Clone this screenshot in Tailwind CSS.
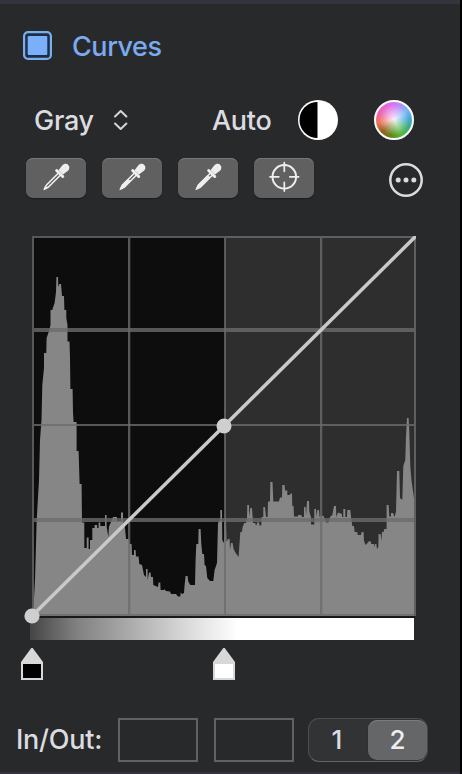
<!DOCTYPE html>
<html lang="en">
<head>
<meta charset="utf-8">
<title>Curves</title>
<script src="https://cdn.jsdelivr.net/npm/@tailwindcss/browser@4"></script>
</head>
<body class="w-[462px] h-[774px] overflow-hidden bg-black font-['Inter','Liberation_Sans',sans-serif] text-[#dcdce0]">
<main class="flex h-[774px] w-[460px] flex-col bg-[#28292b] border-t-4 border-b-2 border-t-[#34343d] border-b-[#35323e]">
  <header class="flex h-[84px] items-center pl-[23px]">
    <svg class="-mt-0.5 size-[29px] shrink-0" viewBox="0 0 29 29"><rect x="1.1" y="1.1" width="26.8" height="26.8" rx="4" fill="#1d2d42" stroke="#79aef3" stroke-width="2.2"/><rect x="4.7" y="5" width="19.6" height="19" rx="1" fill="#7ab0fa"/></svg>
    <h1 class="ml-5 mt-0.5 text-[27px] leading-8 font-medium tracking-[-0.45px] text-[#7aaaf0]">Curves</h1>
  </header>

  <section class="flex h-16 items-center pl-[34px]">
    <span class="mt-0.5 w-[78px] text-[27px] leading-8 font-medium tracking-[-0.3px]">Gray</span>
    <svg class="h-6 w-[18px] shrink-0" viewBox="0 0 18 24" fill="none" stroke="#d6d6da" stroke-width="2" stroke-linecap="round" stroke-linejoin="round"><path d="M3 8.5 8.7 3l5.700 5.500M3 15.500l5.700 5.500 5.700-5.500"/></svg>
    <span class="ml-[82px] mt-0.5 w-[86px] text-[27px] leading-8 font-medium tracking-[-0.3px]">Auto</span>
    <svg class="size-10 shrink-0" viewBox="0 0 40 40"><circle cx="20" cy="20" r="20" fill="#fff"/><path d="M19.500 2a18 18 0 0 0 0 36z" fill="#000"/></svg>
    <div class="ml-9 size-10 shrink-0 rounded-full border-2 border-white bg-[radial-gradient(circle,#ffffffe0_0%,#ffffff70_30%,#ffffff00_60%),conic-gradient(#d875f3,#78b7f5_55deg,#43a8d8_85deg,#3cae83_115deg,#58b83d_155deg,#5c8718_190deg,#96611e_225deg,#ef7454_260deg,#ee62b8_300deg,#d875f3)]"></div>
  </section>

  <section class="flex h-[52px] items-start gap-4 pl-[26px] pt-1.5">
    <button class="flex h-10 w-[60px] items-center justify-center rounded-[7px] bg-[#606060] shadow-[inset_0_1px_0_#777,0_1px_1px_#1b1b1b]">
      <svg class="size-[30px] -translate-y-px" viewBox="0 0 30 30"><path d="M17.500 11 5.500 23 3.500 27 7.500 25l12-12" fill="#606060" stroke="#eee" stroke-width="1.600" stroke-linejoin="round"/><path d="M2.300 28.300 4 24l2.500 2.500z" fill="#eee"/><path d="m15.700 8.500 6 6" stroke="#eee" stroke-width="3" stroke-linecap="round"/><path d="m17.500 8.300 3.500-4.500c2-2.500 4.700-2.500 6.300-.9 1.600 1.700 1.500 4.300-.7 6.100l-4.600 3.500z" fill="#eee"/></svg>
    </button>
    <button class="flex h-10 w-[60px] items-center justify-center rounded-[7px] bg-[#606060] shadow-[inset_0_1px_0_#777,0_1px_1px_#1b1b1b]">
      <svg class="size-[30px] -translate-y-px" viewBox="0 0 30 30"><path d="M17.500 11 5.500 23 3.500 27 7.500 25l12-12" fill="#606060" stroke="#eee" stroke-width="1.600" stroke-linejoin="round"/><path d="M2.300 28.300 4.700 23l6-6 3.300 2-6.300 6.300z" fill="#eee"/><path d="m15.700 8.500 6 6" stroke="#eee" stroke-width="3" stroke-linecap="round"/><path d="m17.500 8.300 3.500-4.500c2-2.500 4.700-2.500 6.300-.9 1.600 1.700 1.500 4.300-.7 6.100l-4.600 3.500z" fill="#eee"/></svg>
    </button>
    <button class="flex h-10 w-[60px] items-center justify-center rounded-[7px] bg-[#606060] shadow-[inset_0_1px_0_#777,0_1px_1px_#1b1b1b]">
      <svg class="size-[30px] -translate-y-px" viewBox="0 0 30 30"><path d="M17.500 11 5.500 23 3.500 27 7.500 25l12-12" fill="#606060" stroke="#eee" stroke-width="1.600" stroke-linejoin="round"/><path d="M2.300 28.300 4.700 23l9.500-9.500 3.500 1.500L8 25z" fill="#eee"/><path d="m15.700 8.500 6 6" stroke="#eee" stroke-width="3" stroke-linecap="round"/><path d="m17.500 8.300 3.500-4.500c2-2.500 4.700-2.500 6.300-.9 1.600 1.700 1.500 4.300-.7 6.100l-4.600 3.500z" fill="#eee"/></svg>
    </button>
    <button class="flex h-10 w-[60px] items-center justify-center rounded-[7px] bg-[#606060] shadow-[inset_0_1px_0_#777,0_1px_1px_#1b1b1b]">
      <svg class="size-8 -translate-y-[1.500px]" viewBox="0 0 32 32" fill="none" stroke="#eee" stroke-width="2" stroke-linecap="round"><circle cx="16.300" cy="16.300" r="11.800"/><path d="M16.300 2v8.800M16.300 21.800v8.800M2 16.300h8.800M21.800 16.300h8.800" stroke-width="1.700"/></svg>
    </button>
    <svg class="ml-[59px] mt-[5px] size-[34px] shrink-0" viewBox="0 0 34 34"><circle cx="17" cy="17" r="15.700" fill="none" stroke="#dcdce0" stroke-width="2.500"/><g fill="#dcdce0"><circle cx="9.200" cy="17" r="2.500"/><circle cx="17" cy="17" r="2.500"/><circle cx="24.800" cy="17" r="2.500"/></g></svg>
  </section>

  <svg class="h-[490px] w-[460px] shrink-0" viewBox="0 204 460 490">
    <defs><linearGradient id="tone" gradientUnits="userSpaceOnUse" x1="30" y1="0" x2="414" y2="0"><stop offset="0" stop-color="#454545"/><stop offset=".12" stop-color="#808080"/><stop offset=".26" stop-color="#ababab"/><stop offset=".4" stop-color="#d7d7d7"/><stop offset=".54" stop-color="#fff"/></linearGradient></defs>
    <path d="M32 236h193v380H32z" fill="#0d0d0d"/>
    <path d="M225 236h191v380H225z" fill="#2e2e2e"/>
    <path fill="#868686" d="M33 616 35 580 36.700 520 39 480 40 440 41.500 420 42.300 385 44 368V353H46.300L46.600 338 49 331 50.500 325V310H52.500V309L54.600 303 56 292 56.400 277H58L58.300 287 59.300 284H61L62 296H64L64.400 310H66.300V318L67.500 325V341.500H69.500L70 358 70.400 389H72.600L73 412 73.600 422H76.600V451H78.600L79.600 484H81.600L82 522.600H84.300V548H86.700V537.600H88.600V549H90V540H92.300V528H94.600V525H97L97.300 528H98.600V522.600H100.300V526H105V515H106.600V526L108.300 537 109 526.600 111 522 113 517H117V521H121V512.600H123V520L125 528 126 539H129L129.600 544H131.600L132 555H134V550H135.600L136 556.600H138.600L139.300 564 142 565 144 575 146 577V569H147.600V580L149 572.600H150.600L151 577H153L153.300 585 158 587 158.600 582.600H160.300L160.600 590H164V589L166 591 170 591.600 171 594H176L178 596.600H180.300L180.600 592.600 182 594 184 593 184.600 585 185.600 576H187.600L188.300 581.600 190.300 585H195L195.600 560 196.300 544H198.300L198.600 529H200.600L201.300 544 202.300 554H204L204.600 565 206 566 207.300 578 210 581H213.300L214.600 570 217 563 218 523 220.300 520V510H222L222.300 540 224 543V520H226L226.600 542 228 539H229.600L230 550 231 543H232.600L233.600 549 235.600 553 238.600 557 240.300 532H242L242.600 527 244.300 523H246L247 518 247.300 505H249L249.300 517 250.300 508H252L253 523H255.300L256 526 258 521 260 526 261.300 525 261.600 517H263.300V507H265L266 517H267.600L268 501.600H270L270.300 482H272.500L273.300 501.600H279L280 497.600H282L282.300 485H284.600L285 490.600H287.300V495H290L290.600 493.600H292L292.300 506H293.600L294 516.600H298V515H301.300L302 517H304V507H305.600L306 515.600 307 501H309L309.300 511.600 311 517V524.600H314.300V509H316L316.600 517 317.300 510H319L319.600 517 323.300 515.600 326 522.600H328.600L330 517 332.300 515 334 506H336L336.300 517 338 512.600 342 514V517H343.300V509H345.300V517H347L347.300 510H350.300L351 517 352.300 526H354L354.600 532H357.300L357.600 535H361L361.600 532H363.600L364 541 365.600 545 369 541.300H370.600L371.300 544H374L375 547V544H376.300L377 549 378.300 547 378.600 534H380.600L381.300 541 382 532H383.600L384.300 529H386.600V505H388.600L389.300 516.600H391V513H393L394.600 517 396 511.600 397 471H399.300L400 498 402.300 500 403.300 466 405.300 460 406 436.600 407 418H408.600L409.300 431.600 410.300 466.600 411.600 481.600 414 498V616z"/>
    <g fill="#6c6c6c" fill-opacity=".8"><path d="M32 236h2v380h-2zM128 238h2.300v376H128zM224 238h2v376h-2zM320 238h2.300v376H320zM414 236h2v380h-2zM34 236h380v2H34z"/><path d="M34 328h380v4H34zM34 424h380v2H34zM34 518h380v4H34zM34 614h380v2H34z"/></g>
    <path d="M32 616h383v2H32z" fill="#18191a"/>
    <path d="M30 618h384v22H30z" fill="url(#tone)"/>
    <clipPath id="plot"><path d="M20 236h396v392H20z"/></clipPath>
    <path d="M32 616 224 426 416 236" clip-path="url(#plot)" fill="none" stroke="#c9c9c9" stroke-width="3.500"/>
    <g fill="#cfcfcf"><circle cx="32" cy="616" r="7.600"/><circle cx="224" cy="426" r="7.500"/></g>
    <path d="M31.300 648h1.400L43 662v18H21v-18z" fill="#d8d8d8"/><path d="M23 664h18v14H23z" fill="#000"/>
    <path d="M223.300 648h1.400L235 662v18h-22v-18z" fill="#d8d8d8"/><path d="M215 664h18v14h-18z" fill="#fff"/>
  </svg>

  <footer class="flex h-[78px] items-start pl-4 pt-6">
    <span class="mt-1.5 w-[102px] whitespace-nowrap text-[27px] leading-8 font-medium tracking-[-0.25px]">In/Out:</span>
    <div class="mr-4 h-11 w-20 shrink-0 border-2 border-[#606164]"></div>
    <div class="mr-3.5 h-11 w-20 shrink-0 border-2 border-[#606164]"></div>
    <div class="flex h-11 w-[120px] shrink-0 rounded-[11px] border border-[#4c4d4f] border-b-[#626365] bg-[#323335] py-px text-[26px] leading-10 font-medium">
      <span class="w-14 text-center">1</span>
      <span class="ml-[3px] h-10 w-[59px] rounded-[9px] bg-[#656668] text-center text-[#eee] shadow-[inset_0_1px_0_#7b7b7d,0_0_1px_#202020]">2</span>
    </div>
  </footer>
</main>
</body>
</html>
